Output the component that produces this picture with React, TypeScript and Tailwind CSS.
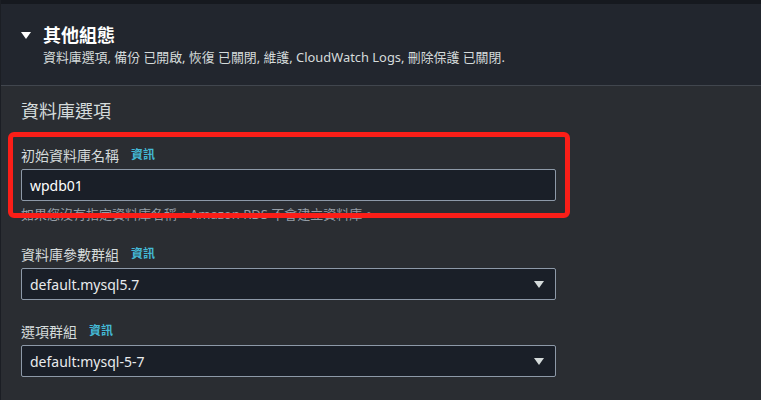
const FONT = "font-['Noto_Sans','Noto_Sans_CJK_TC',sans-serif]"

function InfoLink() {
  return <span className="ml-3 text-[12px] font-bold text-[#44b9d6]">資訊</span>
}

function Caret({ className }: { className?: string }) {
  return (
    <svg viewBox="0 0 10 7" className={className} aria-hidden>
      <path d="M0 0h10L5 7z" fill="currentColor" />
    </svg>
  )
}

function Field({ label, children }: { label: string; children: React.ReactNode }) {
  return (
    <div className="flex flex-col">
      <div className="flex h-5 items-center text-[14px] text-[#d5dbdb]">
        {label}
        <InfoLink />
      </div>
      <div className="mt-1">{children}</div>
    </div>
  )
}

function SelectBox({ value }: { value: string }) {
  return (
    <div className="flex h-[32px] w-[535px] items-center justify-between rounded-[2px] border border-[#8d99a8] bg-[#1a1f28] pl-2 pr-[11px] text-[14px] text-[#e9ebed]">
      <span>{value}</span>
      <Caret className="h-[7px] w-[10px] text-[#d5dbdb]" />
    </div>
  )
}

export default function App() {
  return (
    <div className={`${FONT} relative h-[400px] w-[761px] overflow-hidden border-l border-[#1b1e24] bg-[#2a2d32]`}>
      <div className="h-[4px] bg-[#16191f]" />
      <section className="flex h-[82px] flex-col border-b border-[#41464e] bg-[#22262e] pl-[20px] pt-[20px]">
        <div className="flex h-[22px] items-center">
          <Caret className="h-[7px] w-[10px] text-white" />
          <h2 className="ml-3 text-[18px] font-bold text-white">其他組態</h2>
        </div>
        <p className="ml-[22px] mt-[3px] text-[12.9px] leading-4 text-[#d5dbdb]">
          資料庫選項, 備份 已開啟, 恢復 已關閉, 維護, CloudWatch Logs, 刪除保護 已關閉.
        </p>
      </section>

      <div className="px-[20px] pt-[13px]">
        <h3 className="text-[18px] leading-6 text-[#d5dbdb]">資料庫選項</h3>

        <div className="mt-[22px] flex flex-col">
          <Field label="初始資料庫名稱">
            <div className="flex h-[32px] w-[535px] items-center rounded-[2px] border border-[#8d99a8] bg-[#1a1f28] pl-2 text-[14px] text-white">
              wpdb01
            </div>
          </Field>
          <p className="mt-[5px] text-[13px] leading-4 text-[#959da6]">
            如果您沒有指定資料庫名稱，Amazon RDS 不會建立資料庫。
          </p>

          <div className="mt-[22px]">
            <Field label="資料庫參數群組">
              <SelectBox value="default.mysql5.7" />
            </Field>
          </div>

          <div className="mt-[21px]">
            <Field label="選項群組">
              <SelectBox value="default:mysql-5-7" />
            </Field>
          </div>
        </div>
      </div>

      <div className="pointer-events-none absolute left-[7px] top-[132px] h-[86px] w-[562px] rounded-[6px] border-[5px] border-[#fa1e18]" />
    </div>
  )
}
